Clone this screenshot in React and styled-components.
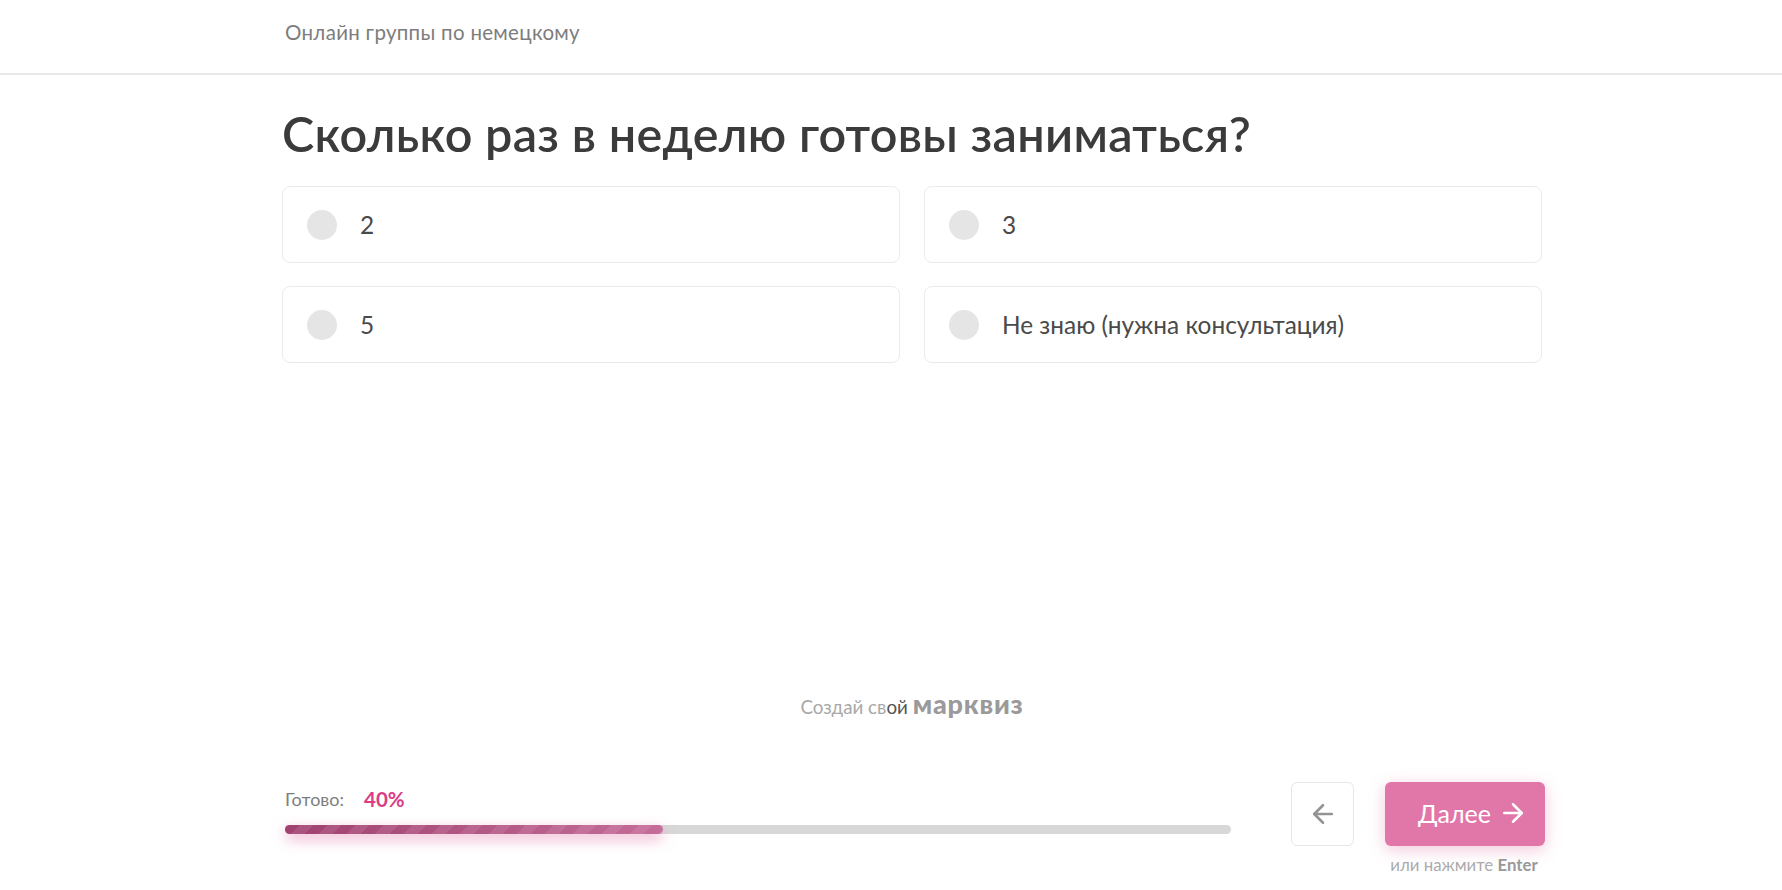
import styled, { createGlobalStyle } from "styled-components";
import { ArrowLeft, ArrowRight } from "lucide-react";

const options = [
  { id: 1, label: "2" },
  { id: 2, label: "3" },
  { id: 3, label: "5" },
  { id: 4, label: "Не знаю (нужна консультация)" },
];

const App = () => {
  const progress = 40;

  return (
    <Page>
      <GlobalStyle />
      <Header>
        <HeaderTitle>Онлайн группы по немецкому</HeaderTitle>
      </Header>
      <Main>
        <Question>Сколько раз в неделю готовы заниматься?</Question>
        <OptionGrid>
          {options.map((option) => (
            <Option key={option.id}>
              <Radio />
              <OptionLabel>{option.label}</OptionLabel>
            </Option>
          ))}
        </OptionGrid>
        <Brand>
          Создай св<BrandAccent>ой</BrandAccent> <BrandName>марквиз</BrandName>
        </Brand>
      </Main>
      <Footer>
        <ProgressBlock>
          <ProgressInfo>
            <ProgressLabel>Готово:</ProgressLabel>
            <ProgressValue>{progress}%</ProgressValue>
          </ProgressInfo>
          <Track>
            <Fill style={{ width: `${progress}%` }} />
          </Track>
        </ProgressBlock>
        <Actions>
          <BackButton aria-label="Назад">
            <ArrowLeft size={30} strokeWidth={2.1} />
          </BackButton>
          <NextColumn>
            <NextButton>
              Далее
              <ArrowRight size={30} strokeWidth={2} />
            </NextButton>
            <Hint>
              или нажмите <b>Enter</b>
            </Hint>
          </NextColumn>
        </Actions>
      </Footer>
    </Page>
  );
};

export default App;

const GlobalStyle = createGlobalStyle`
  html, body {
    margin: 0;
    padding: 0;
    background: #fff;
  }

  body {
    font-family: "Lato", "Liberation Sans", sans-serif;
  }

  * {
    box-sizing: border-box;
  }
`;

const Page = styled.div`
  display: flex;
  flex-direction: column;
  height: 890px;
  overflow: hidden;
`;

const Header = styled.header`
  height: 75px;
  flex-shrink: 0;
  padding: 19px 0 0 285px;
  border-bottom: 2px solid #e8e8e8;
`;

const HeaderTitle = styled.div`
  font-size: 20.5px;
  line-height: 26px;
  color: #7d7d7d;
  letter-spacing: 0.3px;
`;

const Main = styled.main`
  flex: 1;
  display: flex;
  flex-direction: column;
  width: 1260px;
  margin-left: 282px;
`;

const Question = styled.h1`
  margin: 30px 0 0;
  height: 81px;
  font-size: 48.5px;
  line-height: 56px;
  font-weight: 600;
  letter-spacing: 0.3px;
  color: #3b3b3b;
  white-space: nowrap;
`;

const OptionGrid = styled.div`
  display: grid;
  grid-template-columns: 1fr 1fr;
  grid-auto-rows: 77px;
  column-gap: 24px;
  row-gap: 23px;
`;

const Option = styled.div`
  display: flex;
  align-items: center;
  gap: 23px;
  padding-left: 24px;
  border: 1px solid #ebebeb;
  border-radius: 8px;
  background: #fff;
`;

const Radio = styled.span`
  width: 30px;
  height: 30px;
  border-radius: 50%;
  background: #e5e5e5;
`;

const OptionLabel = styled.span`
  font-size: 24.4px;
  color: #4a4a4a;
`;

const Brand = styled.div`
  margin-top: 327px;
  text-align: center;
  font-size: 18.8px;
  line-height: 28px;
  color: #a8a8a8;
`;

const BrandAccent = styled.span`
  color: #555;
`;

const BrandName = styled.span`
  font-size: 27px;
  font-weight: 900;
  letter-spacing: 0.8px;
  color: #9a9a9a;
`;

const Footer = styled.footer`
  display: flex;
  justify-content: space-between;
  width: 1260px;
  height: 108px;
  margin-left: 285px;
  flex-shrink: 0;
`;

const ProgressBlock = styled.div`
  width: 946px;
  padding-top: 5px;
`;

const ProgressInfo = styled.div`
  display: flex;
  align-items: center;
  gap: 20px;
  height: 24px;
`;

const ProgressLabel = styled.span`
  font-size: 18px;
  color: #7d7d7d;
`;

const ProgressValue = styled.span`
  font-size: 20.5px;
  font-weight: 700;
  color: #d93d86;
`;

const Track = styled.div`
  height: 9px;
  margin-top: 14px;
  border-radius: 5px;
  background: #d8d8d8;
`;

const Fill = styled.div`
  height: 100%;
  border-radius: 5px;
  background:
    repeating-linear-gradient(
      135deg,
      rgba(255, 255, 255, 0) 0 10px,
      rgba(255, 255, 255, 0.09) 10px 20px
    ),
    linear-gradient(90deg, #a0416f, #c56c99);
  box-shadow: 0 5px 14px rgba(225, 119, 168, 0.6);
`;

const Actions = styled.div`
  display: flex;
  gap: 31px;
  align-items: flex-start;
`;

const BackButton = styled.button`
  display: flex;
  align-items: center;
  justify-content: center;
  width: 63px;
  height: 64px;
  padding: 0;
  border: 1px solid #e6e6e6;
  border-radius: 6px;
  background: #fff;
  color: #939393;
`;

const NextColumn = styled.div`
  display: flex;
  flex-direction: column;
  align-items: center;
  width: 160px;
`;

const NextButton = styled.button`
  display: flex;
  align-items: center;
  justify-content: flex-end;
  gap: 7px;
  width: 160px;
  height: 64px;
  padding: 0 17px 3px 0;
  border: none;
  border-radius: 6px;
  background: #e177a8;
  color: #fff;
  font-family: inherit;
  font-size: 25px;
  box-shadow: 0 4px 16px rgba(225, 119, 168, 0.4);
`;

const Hint = styled.div`
  margin-top: 7px;
  margin-right: 2px;
  font-size: 16.8px;
  line-height: 24px;
  color: #ababab;
  white-space: nowrap;

  b {
    color: #999;
    font-weight: 700;
  }
`;
